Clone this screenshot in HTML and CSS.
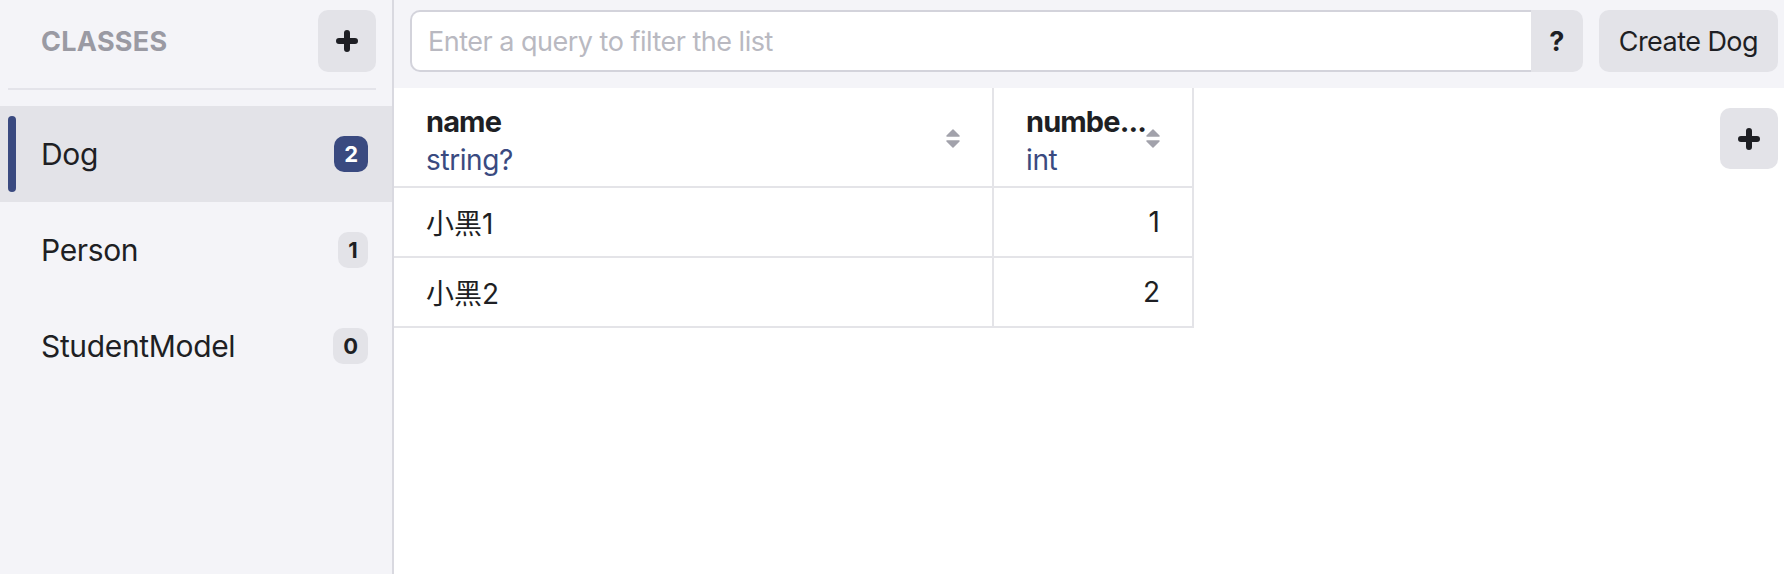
FILE: index.html
```html
<!DOCTYPE html>
<html lang="en">
<head>
<meta charset="utf-8">
<title>Realm Studio</title>
<link rel="stylesheet" href="styles.css">
</head>
<body>
<div class="app">
  <aside class="sidebar">
    <div class="sidebar-header">
      <span class="sidebar-title">Classes</span>
      <button class="icon-btn" type="button" aria-label="Add class">
        <svg width="22" height="22" viewBox="0 0 22 22"><path d="M11 3V19M3 11H19" stroke="#1e1f24" stroke-width="6" stroke-linecap="round"/></svg>
      </button>
    </div>
    <div class="divider"></div>
    <ul class="class-list">
      <li class="class-item active"><span class="marker"></span><span class="class-name">Dog</span><span class="badge">2</span></li>
      <li class="class-item"><span class="marker"></span><span class="class-name">Person</span><span class="badge">1</span></li>
      <li class="class-item"><span class="marker"></span><span class="class-name">StudentModel</span><span class="badge">0</span></li>
    </ul>
  </aside>
  <main class="main">
    <div class="toolbar">
      <div class="query">
        <input class="query-input" type="text" placeholder="Enter a query to filter the list">
        <button class="query-help" type="button">?</button>
      </div>
      <button class="create-btn" type="button">Create Dog</button>
    </div>
    <div class="content">
      <div class="grid">
        <div class="cell head">
          <div class="head-text"><span class="prop-name">name</span><span class="prop-type">string?</span></div>
          <svg class="sort" width="14" height="19" viewBox="0 0 14 19"><path d="M7 1L13 7H1Z M1 12H13L7 18Z" fill="#a2a2ab" stroke="#a2a2ab" stroke-width="1.5" stroke-linejoin="round"/></svg>
        </div>
        <div class="cell head">
          <div class="head-text"><span class="prop-name">numbe...</span><span class="prop-type">int</span></div>
          <svg class="sort" width="14" height="19" viewBox="0 0 14 19"><path d="M7 1L13 7H1Z M1 12H13L7 18Z" fill="#a2a2ab" stroke="#a2a2ab" stroke-width="1.5" stroke-linejoin="round"/></svg>
        </div>
        <div class="cell data">小黑1</div>
        <div class="cell data num">1</div>
        <div class="cell data">小黑2</div>
        <div class="cell data num">2</div>
      </div>
      <button class="icon-btn add-col" type="button" aria-label="Add property">
        <svg width="22" height="22" viewBox="0 0 22 22"><path d="M11 3V19M3 11H19" stroke="#1e1f24" stroke-width="6" stroke-linecap="round"/></svg>
      </button>
    </div>
  </main>
</div>
</body>
</html>
```

FILE: styles.css
```css
* {
  box-sizing: border-box;
}

html, body {
  margin: 0;
  height: 100%;
}

body {
  font-family: Inter, "Noto Sans", "Noto Sans CJK SC", sans-serif;
  color: #1e1f24;
  background: #ffffff;
}

button {
  font-family: inherit;
  cursor: pointer;
}

.app {
  display: flex;
  height: 574px;
}

/* Sidebar */
.sidebar {
  width: 394px;
  flex: none;
  background: #f4f4f8;
  border-right: 2px solid #d9d9e0;
  display: flex;
  flex-direction: column;
}

.sidebar-header {
  display: flex;
  align-items: center;
  justify-content: space-between;
  padding: 10px 16px 16px 41px;
}

.sidebar-title {
  font-size: 27px;
  font-weight: 700;
  text-transform: uppercase;
  color: #9a9aa3;
  letter-spacing: 0.3px;
}

.icon-btn {
  width: 58px;
  height: 62px;
  border: none;
  border-radius: 10px;
  background: #e3e3e8;
  display: flex;
  align-items: center;
  justify-content: center;
  padding: 0;
}

.divider {
  height: 2px;
  margin: 0 16px 0 8px;
  background: #e4e4ea;
}

.class-list {
  list-style: none;
  margin: 16px 0 0;
  padding: 0;
}

.class-item {
  height: 96px;
  display: flex;
  align-items: center;
  padding: 0 24px 0 8px;
}

.class-item.active {
  background: #e3e3e8;
}

.marker {
  width: 8px;
  height: 76px;
  border-radius: 4px;
  margin-right: 25px;
  flex: none;
}

.class-item.active .marker {
  background: #3a4a80;
}

.class-name {
  flex: 1;
  font-size: 30px;
  letter-spacing: -0.35px;
  color: #1e1f24;
}

.badge {
  min-width: 30px;
  height: 36px;
  padding: 0 10px;
  border-radius: 10px;
  background: #e3e3e8;
  font-size: 22px;
  font-weight: 700;
  display: flex;
  align-items: center;
  justify-content: center;
}

.class-item.active .badge {
  background: #3a4a80;
  color: #ffffff;
}

/* Main */
.main {
  flex: 1;
  display: flex;
  flex-direction: column;
  min-width: 0;
}

.toolbar {
  height: 88px;
  background: #f4f4f8;
  display: flex;
  align-items: flex-start;
  padding: 10px 6px 0 16px;
  gap: 16px;
}

.query {
  flex: 1;
  display: flex;
  height: 62px;
}

.query-input {
  flex: 1;
  min-width: 0;
  height: 62px;
  border: 2px solid #d3d3db;
  border-right: none;
  border-radius: 10px 0 0 10px;
  background: #ffffff;
  padding: 0 0 0 16px;
  font-family: inherit;
  font-size: 27px;
  letter-spacing: -0.5px;
  color: #1e1f24;
  outline: none;
}

.query-input::placeholder {
  color: #b9b9c1;
}

.query-help {
  width: 52px;
  height: 62px;
  border: none;
  border-radius: 0 10px 10px 0;
  background: #e3e3e8;
  font-size: 27px;
  font-weight: 700;
  color: #1e1f24;
  padding: 0;
}

.create-btn {
  height: 62px;
  border: none;
  border-radius: 10px;
  background: #e3e3e8;
  padding: 0 20px;
  font-size: 27px;
  letter-spacing: -0.55px;
  color: #1e1f24;
}

.content {
  flex: 1;
  display: flex;
  align-items: flex-start;
  justify-content: space-between;
  background: #ffffff;
}

.grid {
  display: grid;
  grid-template-columns: 600px 200px;
}

.cell {
  border-right: 2px solid #e4e4e8;
  border-bottom: 2px solid #e4e4e8;
  padding: 0 32px;
}

.head {
  height: 100px;
  display: flex;
  align-items: center;
  gap: 4px;
  padding-top: 8px;
}

.head-text {
  flex: 1;
  min-width: 0;
  display: flex;
  flex-direction: column;
}

.prop-name {
  font-size: 29px;
  font-weight: 700;
  letter-spacing: -0.9px;
  line-height: 38px;
  white-space: nowrap;
}

.prop-type {
  font-size: 28px;
  letter-spacing: -0.4px;
  line-height: 38px;
  color: #3a4a80;
}

.sort {
  flex: none;
  margin-top: -6px;
}

.data {
  height: 70px;
  display: flex;
  align-items: center;
  font-size: 28px;
  font-family: Inter, "Noto Sans CJK SC", sans-serif;
}

.data.num {
  justify-content: flex-end;
}

.add-col {
  margin: 20px 6px 0 0;
  height: 61px;
}
```
